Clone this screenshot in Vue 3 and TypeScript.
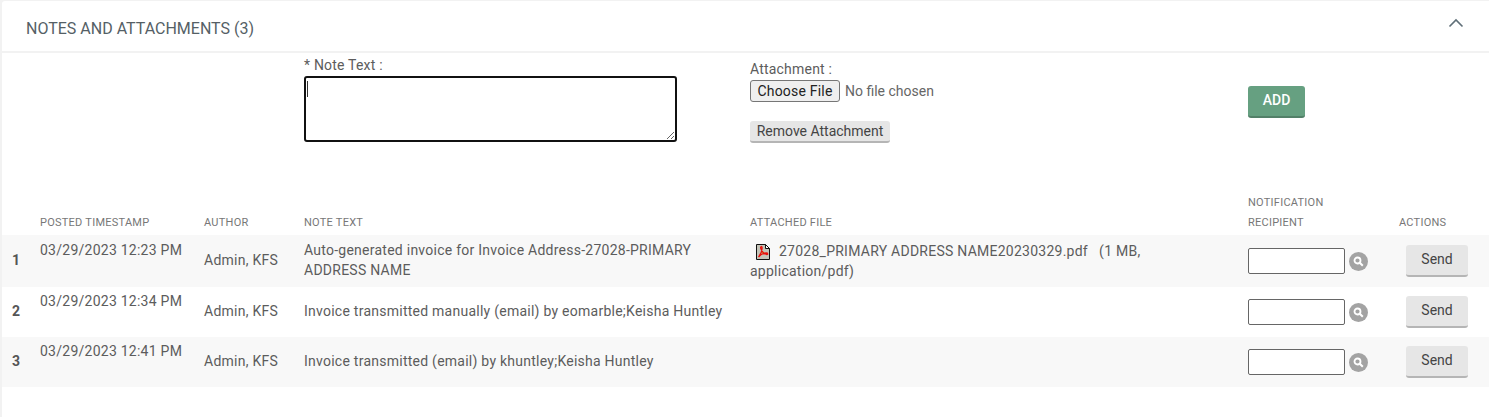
<script setup lang="ts">
interface NoteRow {
  id: number;
  posted: string;
  author: string;
  text: string;
  file?: string;
}

const rows: NoteRow[] = [
  {
    id: 1,
    posted: '03/29/2023 12:23 PM',
    author: 'Admin, KFS',
    text: 'Auto-generated invoice for Invoice Address-27028-PRIMARY ADDRESS NAME',
    file: '27028_PRIMARY ADDRESS NAME20230329.pdf\u00a0\u00a0 (1 MB, application/pdf)',
  },
  {
    id: 2,
    posted: '03/29/2023 12:34 PM',
    author: 'Admin, KFS',
    text: 'Invoice transmitted manually (email) by eomarble;Keisha Huntley',
  },
  {
    id: 3,
    posted: '03/29/2023 12:41 PM',
    author: 'Admin, KFS',
    text: 'Invoice transmitted (email) by khuntley;Keisha Huntley',
  },
];
</script>

<template>
  <div class="page">
    <section class="card">
      <header class="card-header">
        <h2 class="card-title">NOTES AND ATTACHMENTS (3)</h2>
        <svg class="chevron" width="16" height="10" viewBox="0 0 16 10">
          <path d="M1.500 8.500 8 2l6.500 6.500" fill="none" stroke="#5f6f78" stroke-width="1.600" />
        </svg>
      </header>

      <div class="form-row">
        <div class="note-field">
          <label class="field-label">* Note Text :</label>
          <div class="note-box">
            <textarea class="note-input"></textarea>
            <span class="caret"></span>
          </div>
        </div>
        <div class="attach-field">
          <label class="field-label">Attachment :</label>
          <div class="file-row">
            <button class="choose-btn" type="button">Choose File</button>
            <span class="no-file">No file chosen</span>
          </div>
          <button class="remove-btn" type="button">Remove Attachment</button>
        </div>
        <div class="add-field">
          <button class="add-btn" type="button">ADD</button>
        </div>
      </div>

      <table class="notes">
        <colgroup>
          <col class="c-num" />
          <col class="c-posted" />
          <col class="c-author" />
          <col class="c-text" />
          <col class="c-file" />
          <col class="c-recipient" />
          <col class="c-actions" />
        </colgroup>
        <thead>
          <tr>
            <th></th>
            <th>POSTED TIMESTAMP</th>
            <th>AUTHOR</th>
            <th>NOTE TEXT</th>
            <th>ATTACHED FILE</th>
            <th>NOTIFICATION<br />RECIPIENT</th>
            <th>ACTIONS</th>
          </tr>
        </thead>
        <tbody>
          <tr v-for="row in rows" :key="row.id">
            <td class="num lifted">{{ row.id }}</td>
            <td class="posted">{{ row.posted }}</td>
            <td class="lifted">{{ row.author }}</td>
            <td class="lifted">{{ row.text }}</td>
            <td>
              <template v-if="row.file">
                <svg class="pdf-icon" width="14" height="16" viewBox="0 0 14 16">
                  <path d="M.5.5h9l4 4v11H.5z" fill="#c4c4b8" stroke="#111" />
                  <path d="M9.500.5v4h4z" fill="#fff" stroke="#111" />
                  <path d="M5 8.500 7 7l2 2.500-3 .5z" fill="#b5b04a" />
                  <path d="M2.500 13C4.500 10.500 6.500 6.500 6 3c-.5-1.200-2 0-1 2 1 2.500 3 5 6 5.500 1 0 1-1.500-.5-1.500-3 0-6 1.500-8 4z" fill="none" stroke="#e8100c" stroke-width="1.300" />
                </svg>{{ row.file }}
              </template>
            </td>
            <td>
              <div class="recipient">
                <input class="recipient-input" type="text" />
                <span class="search">
                  <svg width="11" height="11" viewBox="0 0 11 11">
                    <circle cx="4.500" cy="4.500" r="3" fill="none" stroke="#fff" stroke-width="1.800" />
                    <path d="m6.800 6.800 3 3" stroke="#fff" stroke-width="2" />
                  </svg>
                </span>
              </div>
            </td>
            <td><button class="send-btn" type="button">Send</button></td>
          </tr>
        </tbody>
      </table>
    </section>
  </div>
</template>

<style>
html,
body {
  background: #f2f2f2;
}
</style>

<style scoped>
.page {
  height: 417px;
  padding: 1px 0 0 2px;
  box-sizing: border-box;
  overflow: hidden;
  font-family: Roboto, "Liberation Sans", sans-serif;
  font-size: 14px;
  color: #5c5c5c;
}

.card {
  height: 416px;
  background: #fff;
  border-radius: 3px 0 0 0;
}

.card-header {
  display: flex;
  justify-content: space-between;
  align-items: flex-start;
  height: 50px;
  padding: 0 24px;
  border-bottom: 2px solid #f2f2f2;
}

.card-title {
  margin: 18px 0 0;
  font-size: 16px;
  font-weight: 400;
  line-height: 20px;
  color: #555f66;
}

.chevron {
  margin-top: 17px;
  margin-right: 1px;
}

.form-row {
  display: flex;
  height: 130px;
  padding-left: 302px;
}

.field-label {
  display: block;
  line-height: 18px;
  letter-spacing: 0.2px;
}

.note-field {
  width: 446px;
  padding-top: 3px;
}

.note-box {
  position: relative;
  width: 373px;
  height: 66px;
  margin-top: 2px;
}

.note-input {
  display: block;
  width: 100%;
  height: 100%;
  box-sizing: border-box;
  border: 2px solid #111;
  border-radius: 3px;
  outline: none;
  resize: both;
  background: #fff;
}

.caret {
  position: absolute;
  left: 3px;
  top: 5px;
  width: 1px;
  height: 16px;
  background: #333;
}

.attach-field {
  width: 498px;
  padding-top: 7px;
}

.file-row {
  display: flex;
  align-items: center;
  gap: 5px;
  margin-top: 2px;
}

.choose-btn {
  width: 90px;
  height: 22px;
  padding: 0;
  border: 1px solid #767676;
  border-radius: 3px;
  background: #efefef;
  color: #222;
  font: 14px Roboto, sans-serif;
  letter-spacing: 0.2px;
}

.no-file {
  color: #666;
}

.remove-btn {
  display: block;
  width: 140px;
  height: 22px;
  margin-top: 19px;
  padding: 0;
  border: 0;
  border-bottom: 2px solid #b5b5b5;
  border-radius: 3px;
  background: #e6e6e6;
  color: #444;
  font: 14px Roboto, sans-serif;
}

.add-field {
  padding-top: 33px;
}

.add-btn {
  width: 57px;
  height: 32px;
  padding: 0 0 2px;
  border: 0;
  border-bottom: 2px solid #528068;
  border-radius: 3px;
  background: #66a081;
  color: #fff;
  font: 500 14px Roboto, sans-serif;
}

.notes {
  table-layout: fixed;
  width: 1487px;
  border-collapse: collapse;
  letter-spacing: 0.25px;
}

.c-num { width: 38px; }
.c-posted { width: 164px; }
.c-author { width: 100px; }
.c-text { width: 446px; }
.c-file { width: 498px; }
.c-recipient { width: 151px; }

.notes th {
  height: 50px;
  padding: 0 0 2px;
  vertical-align: bottom;
  text-align: left;
  font-size: 11px;
  font-weight: 400;
  line-height: 20px;
  color: #777;
  letter-spacing: 0.25px;
}

.notes td {
  padding: 0 2px 0 0;
  line-height: 20px;
  vertical-align: middle;
}

.notes td.lifted {
  padding-bottom: 2px;
}

.notes tbody tr {
  height: 50px;
}

.notes tbody tr:first-child {
  height: 52px;
}

.notes tbody tr:nth-child(odd) {
  background: #f8f8f8;
}

.num {
  padding-left: 10px !important;
  font-weight: 700;
  color: #555;
}

.posted {
  vertical-align: top !important;
  padding-top: 5px !important;
}

.notes tbody tr:nth-child(n + 2) .posted {
  padding-top: 4px !important;
}

.pdf-icon {
  vertical-align: -4px;
  margin: 0 9px 0 6px;
}

.recipient {
  display: flex;
  align-items: center;
  gap: 4px;
}

.recipient-input {
  width: 97px;
  height: 26px;
  box-sizing: border-box;
  border: 1px solid #666;
  border-radius: 2px;
  background: #fff;
}

.search {
  display: flex;
  align-items: center;
  justify-content: center;
  width: 19px;
  height: 19px;
  border-radius: 50%;
  background: #a3a3a3;
}

.send-btn {
  display: block;
  width: 62px;
  height: 32px;
  margin-left: 7px;
  padding: 0 0 3px;
  border: 0;
  border-bottom: 2px solid #b5b5b5;
  border-radius: 3px;
  background: #e6e6e6;
  color: #444;
  font: 14px Roboto, sans-serif;
}
</style>
